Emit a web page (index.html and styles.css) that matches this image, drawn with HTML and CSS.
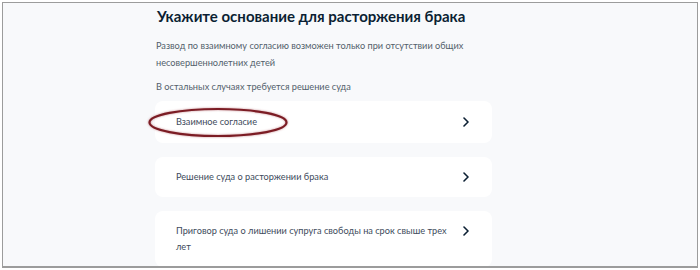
FILE: index.html
```html
<!DOCTYPE html>
<html lang="ru">
<head>
    <meta charset="UTF-8">
    <meta name="viewport" content="width=device-width, initial-scale=1.0">
    <title>Основание для расторжения брака</title>
    <link rel="stylesheet" href="styles.css">
</head>
<body>
    <div class="frame">
        <div class="content">
            <h1 class="title">Укажите основание для расторжения брака</h1>
            <p class="note">Развод по взаимному согласию возможен только при отсутствии общих<br>несовершеннолетних детей</p>
            <p class="note">В остальных случаях требуется решение суда</p>

            <div class="options">
                <a class="option" href="#">
                    <span class="option-text">Взаимное согласие</span>
                    <svg class="chevron" width="6" height="10" viewBox="0 0 6 10"><path d="M1 1l4 4-4 4" fill="none" stroke="#0b1f33" stroke-width="1.6" stroke-linecap="round" stroke-linejoin="round"/></svg>
                    <!-- hand-drawn highlight over the first option -->
                    <svg class="mark" width="142" height="31" viewBox="0 0 142 31"><ellipse cx="71" cy="15.5" rx="68.5" ry="13.5" fill="none" stroke="#7b1c24" stroke-width="2.2"/></svg>
                </a>
                <a class="option" href="#">
                    <span class="option-text">Решение суда о расторжении брака</span>
                    <svg class="chevron" width="6" height="10" viewBox="0 0 6 10"><path d="M1 1l4 4-4 4" fill="none" stroke="#0b1f33" stroke-width="1.6" stroke-linecap="round" stroke-linejoin="round"/></svg>
                </a>
                <a class="option" href="#">
                    <span class="option-text">Приговор суда о лишении супруга свободы на срок свыше трех<br>лет</span>
                    <svg class="chevron" width="6" height="10" viewBox="0 0 6 10"><path d="M1 1l4 4-4 4" fill="none" stroke="#0b1f33" stroke-width="1.6" stroke-linecap="round" stroke-linejoin="round"/></svg>
                </a>
            </div>
        </div>
    </div>
</body>
</html>
```

FILE: styles.css
```css
html, body {
    margin: 0;
    padding: 0;
    background: #fff;
}
body {
    font-family: Lato, "Noto Sans", sans-serif;
    padding: 2px;
}
.frame {
    height: 263px;
    border: 1px solid #9c9c9c;
    border-bottom-width: 2px;
    background: #f8f9fb;
    overflow: hidden;
}
.content {
    width: 337px;
    margin-left: 152px;
    padding-top: 3px;
}
.title {
    margin: 0 0 0 2px;
    font-size: 15px;
    font-weight: 700;
    line-height: 20px;
    color: #0b1f33;
}
.note {
    margin: 11px 0 0 1px;
    font-size: 9.2px;
    line-height: 17px;
    color: #535f6b;
    white-space: nowrap;
}
.note + .note {
    margin-top: 7px;
}
.options {
    display: flex;
    flex-direction: column;
    gap: 14px;
    margin-top: 6px;
}
.option {
    position: relative;
    display: flex;
    align-items: flex-start;
    justify-content: space-between;
    padding: 12px 23px 12px 21px;
    background: #fff;
    border-radius: 8px;
    text-decoration: none;
}
.option:first-child {
    padding-top: 13px;
    padding-bottom: 13px;
}
.option-text {
    font-size: 9.2px;
    line-height: 16px;
    color: #3e4b5c;
}
.chevron {
    margin-top: 3px;
    flex: none;
}
.mark {
    position: absolute;
    left: -8px;
    top: 6px;
    filter: drop-shadow(0 0 1px rgba(150, 40, 50, 0.5));
}
```
